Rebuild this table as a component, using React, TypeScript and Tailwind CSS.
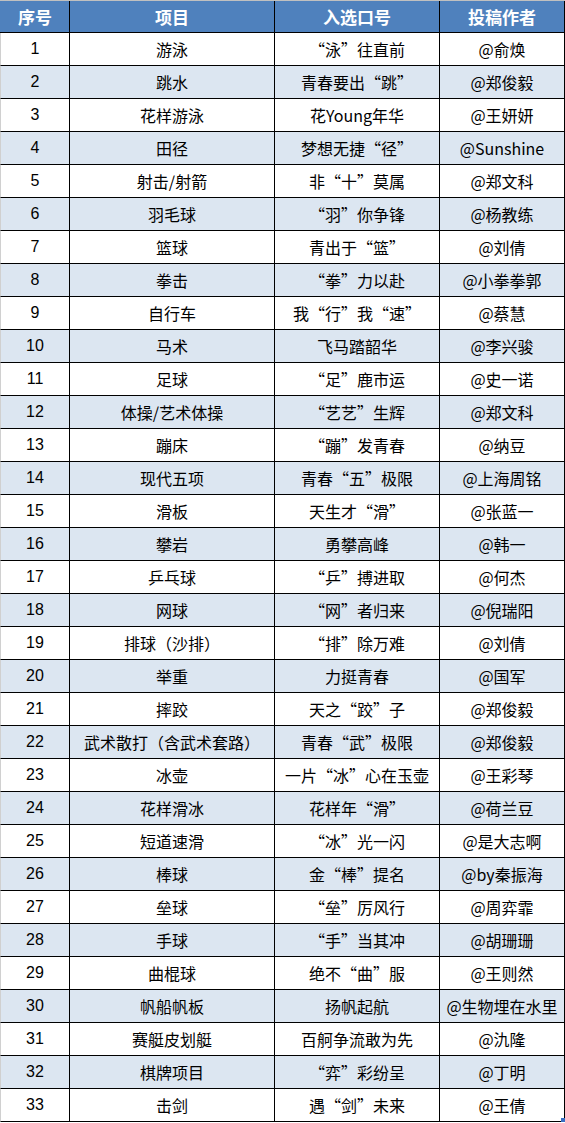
const ROWS: Array<[string, string, string]> = [
  ["游泳", "“泳”往直前", "@俞焕"],
  ["跳水", "青春要出“跳”", "@郑俊毅"],
  ["花样游泳", "花Young年华", "@王妍妍"],
  ["田径", "梦想无捷“径”", "@Sunshine"],
  ["射击/射箭", "非“十”莫属", "@郑文科"],
  ["羽毛球", "“羽”你争锋", "@杨教练"],
  ["篮球", "青出于“篮”", "@刘倩"],
  ["拳击", "“拳”力以赴", "@小拳拳郭"],
  ["自行车", "我“行”我“速”", "@蔡慧"],
  ["马术", "飞马踏韶华", "@李兴骏"],
  ["足球", "“足”鹿市运", "@史一诺"],
  ["体操/艺术体操", "“艺艺”生辉", "@郑文科"],
  ["蹦床", "“蹦”发青春", "@纳豆"],
  ["现代五项", "青春“五”极限", "@上海周铭"],
  ["滑板", "天生才“滑”", "@张蓝一"],
  ["攀岩", "勇攀高峰", "@韩一"],
  ["乒乓球", "“乒”搏进取", "@何杰"],
  ["网球", "“网”者归来", "@倪瑞阳"],
  ["排球（沙排）", "“排”除万难", "@刘倩"],
  ["举重", "力挺青春", "@国军"],
  ["摔跤", "天之“跤”子", "@郑俊毅"],
  ["武术散打（含武术套路）", "青春“武”极限", "@郑俊毅"],
  ["冰壶", "一片“冰”心在玉壶", "@王彩琴"],
  ["花样滑冰", "花样年“滑”", "@荷兰豆"],
  ["短道速滑", "“冰”光一闪", "@是大志啊"],
  ["棒球", "金“棒”提名", "@by秦振海"],
  ["垒球", "“垒”厉风行", "@周弈霏"],
  ["手球", "“手”当其冲", "@胡珊珊"],
  ["曲棍球", "绝不“曲”服", "@王则然"],
  ["帆船帆板", "扬帆起航", "@生物埋在水里"],
  ["赛艇皮划艇", "百舸争流敢为先", "@氿隆"],
  ["棋牌项目", "“弈”彩纷呈", "@丁明"],
  ["击剑", "遇“剑”未来", "@王倩"],
];

const COLS = "grid grid-cols-[69px_205px_165px_125px]";
const CELL = "flex items-center justify-center border-r border-black";

export default function App() {
  return (
    <div className="relative w-[565px] bg-white font-['Noto_Sans_CJK_SC',sans-serif] text-[16px] text-black">
      <div className={`${COLS} h-[33px] border-t border-b border-t-[#c0c0c0] border-b-black bg-[#4f81bd] pl-px text-[17px] font-bold text-white`}>
        <div className={CELL}>序号</div>
        <div className={CELL}>项目</div>
        <div className={CELL}>入选口号</div>
        <div className={CELL}>投稿作者</div>
      </div>
      {ROWS.map(([item, slogan, author], i) => (
        <div
          key={i}
          className={`${COLS} h-[33px] border-b border-l border-b-black border-l-[#d0d0d0] ${
            i % 2 === 1 ? "bg-[#dce6f1]" : "bg-white"
          }`}
        >
          <div className={`${CELL} font-['Liberation_Sans',sans-serif]`}>{i + 1}</div>
          <div className={CELL}>{item}</div>
          <div className={CELL}>{slogan}</div>
          <div className={`${CELL} whitespace-nowrap`}>{author}</div>
        </div>
      ))}
      <div className="h-px" />
      <div className="absolute right-0 bottom-[1px] h-[4px] w-[4px] bg-[#3b6fc4]" />
    </div>
  );
}
